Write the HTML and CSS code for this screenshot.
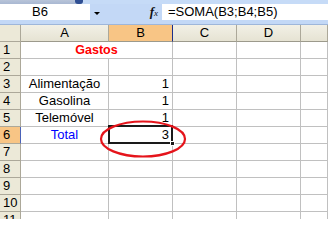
FILE: index.html
```html
<!DOCTYPE html>
<html>
<head>
<meta charset="utf-8">
<link rel="stylesheet" href="styles.css">
</head>
<body>
<div class="app">
  <div class="top">
    <div class="toolstrip"><div class="toolfrag"><span class="chev"></span></div></div>
    <div class="fbar">
      <div class="namebox">B6</div>
      <div class="nbarrow"><span class="tri"></span></div>
      <div class="fxzone"><span class="fx">f<span class="fxx">x</span></span></div>
      <div class="finput">=SOMA(B3;B4;B5)</div>
    </div>
  </div>
  <div class="sheet">
    <div class="hd corner"></div>
    <div class="hd col">A</div>
    <div class="hd col sel">B</div>
    <div class="hd col">C</div>
    <div class="hd col">D</div>
    <div class="hd col"></div>

    <div class="hd row">1</div>
    <div class="c merged title">Gastos</div>
    <div class="c"></div><div class="c"></div><div class="c"></div>

    <div class="hd row">2</div>
    <div class="c"></div><div class="c"></div><div class="c"></div><div class="c"></div><div class="c"></div>

    <div class="hd row">3</div>
    <div class="c ctr">Alimentação</div><div class="c num">1</div><div class="c"></div><div class="c"></div><div class="c"></div>

    <div class="hd row">4</div>
    <div class="c ctr">Gasolina</div><div class="c num">1</div><div class="c"></div><div class="c"></div><div class="c"></div>

    <div class="hd row">5</div>
    <div class="c ctr">Telemóvel</div><div class="c num">1</div><div class="c"></div><div class="c"></div><div class="c"></div>

    <div class="hd row sel">6</div>
    <div class="c ctr blue">Total</div><div class="c num active">3</div><div class="c"></div><div class="c"></div><div class="c"></div>

    <div class="hd row">7</div>
    <div class="c"></div><div class="c"></div><div class="c"></div><div class="c"></div><div class="c"></div>

    <div class="hd row">8</div>
    <div class="c"></div><div class="c"></div><div class="c"></div><div class="c"></div><div class="c"></div>

    <div class="hd row">9</div>
    <div class="c"></div><div class="c"></div><div class="c"></div><div class="c"></div><div class="c"></div>

    <div class="hd row">10</div>
    <div class="c"></div><div class="c"></div><div class="c"></div><div class="c"></div><div class="c"></div>

    <div class="hd row">11</div>
    <div class="c"></div><div class="c"></div><div class="c"></div><div class="c"></div><div class="c"></div>
  </div>
  <svg class="circle" width="90" height="41" viewBox="0 0 90 41">
    <ellipse cx="45" cy="19" rx="42" ry="17.5" fill="none" stroke="#e5141b" stroke-width="2.2"/>
  </svg>
</div>
</body>
</html>
```

FILE: styles.css
```css
html, body {
  margin: 0;
  padding: 0;
  background: #ffffff;
}
.app {
  position: relative;
  width: 328px;
  height: 219px;
  overflow: hidden;
  font-family: "Liberation Sans", Arial, sans-serif;
  font-size: 13px;
  color: #000;
}
.top {
  height: 25px;
  background: #c3d8f6;
  box-sizing: border-box;
  border-bottom: 1px solid #9eb6da;
}
.toolstrip {
  height: 4px;
  display: flex;
  background: #c6dbf7;
}
.toolfrag {
  width: 83px;
  height: 4px;
  display: flex;
  justify-content: flex-end;
  background: linear-gradient(#b8c4d8, #a9b8d2);
  border-bottom-right-radius: 3px;
}
.chev {
  width: 8px;
  height: 4px;
  background: #2f4f93;
  border-bottom-left-radius: 3px;
  border-bottom-right-radius: 3px;
}
.fbar {
  height: 16px;
  display: flex;
}
.namebox {
  width: 90px;
  background: #fff;
  box-sizing: border-box;
  padding-left: 32px;
  line-height: 16px;
}
.nbarrow {
  width: 14px;
  display: flex;
  align-items: center;
  justify-content: center;
}
.tri {
  width: 0;
  height: 0;
  border-left: 3px solid transparent;
  border-right: 3px solid transparent;
  border-top: 3px solid #000;
  margin-top: 2px;
}
.fxzone {
  width: 58px;
  display: flex;
  justify-content: flex-end;
  align-items: center;
  padding-right: 4px;
  box-sizing: border-box;
}
.fx {
  font-family: "Liberation Serif", "Times New Roman", serif;
  font-style: italic;
  font-weight: bold;
  font-size: 13px;
  line-height: 16px;
  color: #111;
}
.fxx {
  font-size: 9px;
  font-weight: normal;
}
.finput {
  flex: 1;
  background: #fff;
  padding-left: 6px;
  line-height: 16px;
}
.sheet {
  display: grid;
  grid-template-columns: 21px 88px 64px 64px 64px 27px;
  grid-auto-rows: 17px;
}
.sheet > div {
  box-sizing: border-box;
  border-right: 1px solid #c0c0c0;
  border-bottom: 1px solid #c0c0c0;
  line-height: 16px;
  white-space: nowrap;
  overflow: visible;
}
.sheet > .hd {
  background: #ece9d8;
  border-right-color: #aca899;
  border-bottom-color: #aca899;
  text-align: center;
}
.sheet > .hd.col {
  background: linear-gradient(#f2f0e6, #e6e3d3);
  border-bottom-color: #9c9a8c;
}
.sheet > .hd.row {
  text-align: left;
  padding-left: 3px;
}
.sheet > .hd.sel {
  background: #f8c585;
  border-right-color: #1c2f8a;
}
.sheet > .hd.row.sel {
  border-right-color: #4a62b8;
}
.merged {
  grid-column: span 2;
}
.title {
  text-align: center;
  color: #ff0000;
  font-weight: bold;
  font-size: 12.5px;
}
.ctr {
  text-align: center;
}
.num {
  text-align: right;
  padding-right: 3px;
}
.blue {
  color: #0000ff;
}
.active {
  position: relative;
}
.active::before {
  content: "";
  position: absolute;
  left: -1px;
  top: -2px;
  right: -1px;
  bottom: -1px;
  border: 2px solid #1a1a1a;
}
.active::after {
  content: "";
  position: absolute;
  right: -3px;
  bottom: -3px;
  width: 5px;
  height: 5px;
  background: #1a1a1a;
  border: 1px solid #fff;
  box-sizing: border-box;
}
.circle {
  position: absolute;
  left: 98px;
  top: 120px;
}
```
